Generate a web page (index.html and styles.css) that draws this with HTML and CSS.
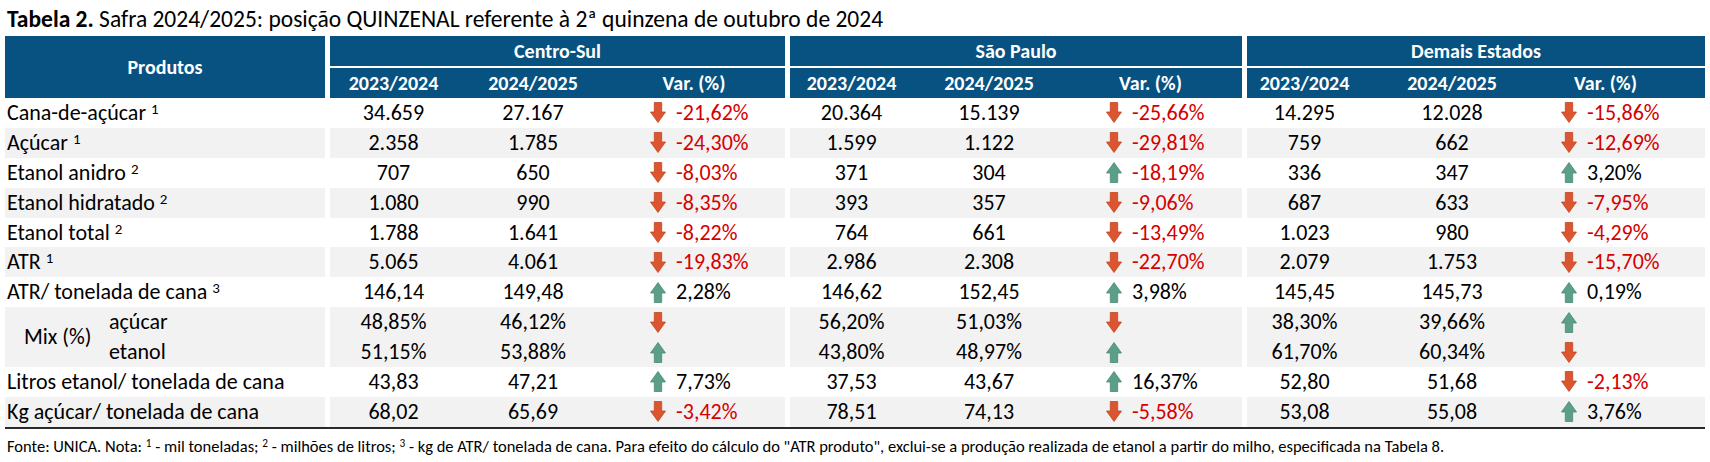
FILE: index.html
```html
<!DOCTYPE html>
<html lang="pt-BR">
<head>
<meta charset="utf-8">
<title>Tabela 2</title>
<link rel="stylesheet" href="styles.css">
</head>
<body>
<svg class="defs" aria-hidden="true">
  <symbol id="dn" viewBox="0 0 16 21"><path d="M4.3 0.5H11.7V10H15.5L8 20.5L0.5 10H4.3Z"/></symbol>
  <symbol id="up" viewBox="0 0 16 21"><path d="M4.3 20.5H11.7V11H15.5L8 0.5L0.5 11H4.3Z"/></symbol>
</svg>
<div class="page">
  <p class="title"><b>Tabela 2.</b> Safra 2024/2025: posição QUINZENAL referente à 2ª quinzena de outubro de 2024</p>
  <div class="table">
    <div class="head">
      <div class="h-prod">Produtos</div>
      <div class="h-group">
        <div class="h-name">Centro-Sul</div>
        <div class="grp cs h-sub"><span>2023/2024</span><span>2024/2025</span><span class="hv">Var. (%)</span></div>
      </div>
      <div class="h-group">
        <div class="h-name">São Paulo</div>
        <div class="grp sp h-sub"><span>2023/2024</span><span>2024/2025</span><span class="hv">Var. (%)</span></div>
      </div>
      <div class="h-group">
        <div class="h-name">Demais Estados</div>
        <div class="grp de h-sub"><span>2023/2024</span><span>2024/2025</span><span class="hv">Var. (%)</span></div>
      </div>
    </div>

    <div class="row">
      <div class="lbl">Cana-de-açúcar <sup>1</sup></div>
      <div class="grp cs"><span class="n">34.659</span><span class="n">27.167</span><span class="v neg"><svg class="arr dn"><use href="#dn"/></svg>-21,62%</span></div>
      <div class="grp sp"><span class="n">20.364</span><span class="n">15.139</span><span class="v neg"><svg class="arr dn"><use href="#dn"/></svg>-25,66%</span></div>
      <div class="grp de"><span class="n">14.295</span><span class="n">12.028</span><span class="v neg"><svg class="arr dn"><use href="#dn"/></svg>-15,86%</span></div>
    </div>
    <div class="row alt">
      <div class="lbl">Açúcar <sup>1</sup></div>
      <div class="grp cs"><span class="n">2.358</span><span class="n">1.785</span><span class="v neg"><svg class="arr dn"><use href="#dn"/></svg>-24,30%</span></div>
      <div class="grp sp"><span class="n">1.599</span><span class="n">1.122</span><span class="v neg"><svg class="arr dn"><use href="#dn"/></svg>-29,81%</span></div>
      <div class="grp de"><span class="n">759</span><span class="n">662</span><span class="v neg"><svg class="arr dn"><use href="#dn"/></svg>-12,69%</span></div>
    </div>
    <div class="row">
      <div class="lbl">Etanol anidro <sup>2</sup></div>
      <div class="grp cs"><span class="n">707</span><span class="n">650</span><span class="v neg"><svg class="arr dn"><use href="#dn"/></svg>-8,03%</span></div>
      <div class="grp sp"><span class="n">371</span><span class="n">304</span><span class="v neg"><svg class="arr up"><use href="#up"/></svg>-18,19%</span></div>
      <div class="grp de"><span class="n">336</span><span class="n">347</span><span class="v"><svg class="arr up"><use href="#up"/></svg>3,20%</span></div>
    </div>
    <div class="row alt">
      <div class="lbl">Etanol hidratado <sup>2</sup></div>
      <div class="grp cs"><span class="n">1.080</span><span class="n">990</span><span class="v neg"><svg class="arr dn"><use href="#dn"/></svg>-8,35%</span></div>
      <div class="grp sp"><span class="n">393</span><span class="n">357</span><span class="v neg"><svg class="arr dn"><use href="#dn"/></svg>-9,06%</span></div>
      <div class="grp de"><span class="n">687</span><span class="n">633</span><span class="v neg"><svg class="arr dn"><use href="#dn"/></svg>-7,95%</span></div>
    </div>
    <div class="row">
      <div class="lbl">Etanol total <sup>2</sup></div>
      <div class="grp cs"><span class="n">1.788</span><span class="n">1.641</span><span class="v neg"><svg class="arr dn"><use href="#dn"/></svg>-8,22%</span></div>
      <div class="grp sp"><span class="n">764</span><span class="n">661</span><span class="v neg"><svg class="arr dn"><use href="#dn"/></svg>-13,49%</span></div>
      <div class="grp de"><span class="n">1.023</span><span class="n">980</span><span class="v neg"><svg class="arr dn"><use href="#dn"/></svg>-4,29%</span></div>
    </div>
    <div class="row alt">
      <div class="lbl">ATR <sup>1</sup></div>
      <div class="grp cs"><span class="n">5.065</span><span class="n">4.061</span><span class="v neg"><svg class="arr dn"><use href="#dn"/></svg>-19,83%</span></div>
      <div class="grp sp"><span class="n">2.986</span><span class="n">2.308</span><span class="v neg"><svg class="arr dn"><use href="#dn"/></svg>-22,70%</span></div>
      <div class="grp de"><span class="n">2.079</span><span class="n">1.753</span><span class="v neg"><svg class="arr dn"><use href="#dn"/></svg>-15,70%</span></div>
    </div>
    <div class="row">
      <div class="lbl">ATR/ tonelada de cana <sup>3</sup></div>
      <div class="grp cs"><span class="n">146,14</span><span class="n">149,48</span><span class="v"><svg class="arr up"><use href="#up"/></svg>2,28%</span></div>
      <div class="grp sp"><span class="n">146,62</span><span class="n">152,45</span><span class="v"><svg class="arr up"><use href="#up"/></svg>3,98%</span></div>
      <div class="grp de"><span class="n">145,45</span><span class="n">145,73</span><span class="v"><svg class="arr up"><use href="#up"/></svg>0,19%</span></div>
    </div>
    <div class="row alt mix">
      <div class="lbl mix-lbl"><span class="mix-name">Mix (%)</span><span class="mix-subs"><span>açúcar</span><span>etanol</span></span></div>
      <div class="grp cs"><span class="n">48,85%</span><span class="n">46,12%</span><span class="v"><svg class="arr dn"><use href="#dn"/></svg></span><span class="n">51,15%</span><span class="n">53,88%</span><span class="v"><svg class="arr up"><use href="#up"/></svg></span></div>
      <div class="grp sp"><span class="n">56,20%</span><span class="n">51,03%</span><span class="v"><svg class="arr dn"><use href="#dn"/></svg></span><span class="n">43,80%</span><span class="n">48,97%</span><span class="v"><svg class="arr up"><use href="#up"/></svg></span></div>
      <div class="grp de"><span class="n">38,30%</span><span class="n">39,66%</span><span class="v"><svg class="arr up"><use href="#up"/></svg></span><span class="n">61,70%</span><span class="n">60,34%</span><span class="v"><svg class="arr dn"><use href="#dn"/></svg></span></div>
    </div>
    <div class="row">
      <div class="lbl">Litros etanol/ tonelada de cana</div>
      <div class="grp cs"><span class="n">43,83</span><span class="n">47,21</span><span class="v"><svg class="arr up"><use href="#up"/></svg>7,73%</span></div>
      <div class="grp sp"><span class="n">37,53</span><span class="n">43,67</span><span class="v"><svg class="arr up"><use href="#up"/></svg>16,37%</span></div>
      <div class="grp de"><span class="n">52,80</span><span class="n">51,68</span><span class="v neg"><svg class="arr dn"><use href="#dn"/></svg>-2,13%</span></div>
    </div>
    <div class="row alt">
      <div class="lbl">Kg açúcar/ tonelada de cana</div>
      <div class="grp cs"><span class="n">68,02</span><span class="n">65,69</span><span class="v neg"><svg class="arr dn"><use href="#dn"/></svg>-3,42%</span></div>
      <div class="grp sp"><span class="n">78,51</span><span class="n">74,13</span><span class="v neg"><svg class="arr dn"><use href="#dn"/></svg>-5,58%</span></div>
      <div class="grp de"><span class="n">53,08</span><span class="n">55,08</span><span class="v"><svg class="arr up"><use href="#up"/></svg>3,76%</span></div>
    </div>
  </div>
  <p class="foot">Fonte: UNICA. Nota: <sup>1</sup> - mil toneladas; <sup>2</sup> - milhões de litros; <sup>3</sup> - kg de ATR/ tonelada de cana. Para efeito do cálculo do "ATR produto", exclui-se a produção realizada de etanol a partir do milho, especificada na Tabela 8.</p>
</div>
</body>
</html>
```

FILE: styles.css
```css
* { box-sizing: border-box; }
html, body { margin: 0; padding: 0; background: #fff; }
body {
  font-family: Carlito, Calibri, Lato, "Liberation Sans", sans-serif;
  color: #000;
}
.defs { position: absolute; width: 0; height: 0; overflow: hidden; }

.page { padding: 0 5px; width: 1710px; }

.title {
  margin: 0;
  padding: 6px 0 0 2px;
  height: 36px;
  font-size: 23.5px;
  line-height: 27px;
  white-space: nowrap;
}
.title b { font-weight: 700; }

.table { width: 1700px; border-bottom: 2px solid #2b2b2b; }

.head, .row {
  display: grid;
  grid-template-columns: 320px 455px 452px 458px;
  column-gap: 5px;
}

.head { color: #fff; font-weight: 700; font-size: 20px; }
.h-prod {
  background: #085281;
  height: 62px;
  display: flex; align-items: center; justify-content: center;
}
.h-group { display: flex; flex-direction: column; row-gap: 2px; }
.h-name, .h-sub { background: #085281; height: 30px; }
.h-name { display: flex; align-items: center; justify-content: center; }
.h-sub span { display: flex; align-items: center; justify-content: center; }
.h-sub .hv { padding-right: 6px; }
.h-sub.de .hv { padding-right: 36px; }

.grp { display: grid; grid-auto-rows: 29.9px; }
.grp.cs { grid-template-columns: 127px 152px 176px; }
.grp.sp { grid-template-columns: 123px 152px 177px; }
.grp.de { grid-template-columns: 115px 180px 163px; }
.h-sub.grp { grid-auto-rows: 30px; }

.row { font-size: 22px; line-height: 29.9px; }
.row.alt > * { background: #f2f2f2; }

.lbl { padding-left: 2px; white-space: nowrap; height: 29.9px; }
.mix .lbl { height: 59.8px; }
sup { font-size: 0.68em; vertical-align: 0; position: relative; top: -0.4em; line-height: 0; }

.n { text-align: center; }
.v { display: flex; align-items: center; padding-left: 41px; }
.grp.de .v { padding-left: 19px; }
.v.neg { color: #d60000; }
.arr { width: 16px; height: 21px; margin-right: 10px; flex: none; }
.arr.dn { fill: #db5530; stroke: #c2461f; stroke-width: 0.8; }
.arr.up { fill: #5c9f89; stroke: #4a8a74; stroke-width: 0.8; }

.mix-lbl { display: flex; align-items: center; padding-left: 19px; }
.mix-name { width: 85px; }
.mix-subs { display: flex; flex-direction: column; }

.foot {
  margin: 7px 0 0 2px;
  font-size: 16.5px;
  line-height: 20px;
  white-space: nowrap;
}
```
